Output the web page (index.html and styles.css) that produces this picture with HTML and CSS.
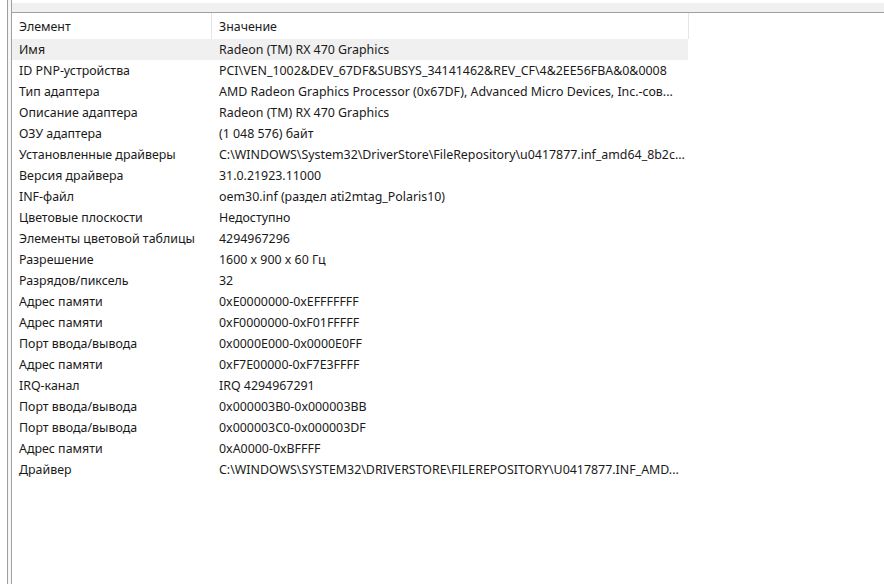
FILE: index.html
```html
<!doctype html>
<html>
  <head>
    <meta charset="utf-8">
    <title>Свойства</title>
    <link rel="stylesheet" href="styles.css">
  </head>
  <body>
    <div class="frame">
      <div class="gutter"></div>
      <div class="edge"></div>
      <div class="pane">
        <div class="strip"></div>
        <div class="list">
          <div class="row head">
            <div class="cell name">Элемент</div>
            <div class="cell value">Значение</div>
          </div>
          <div class="row selected">
            <div class="cell name">Имя</div>
            <div class="cell value">Radeon (TM) RX 470 Graphics</div>
          </div>
          <div class="row">
            <div class="cell name">ID PNP-устройства</div>
            <div class="cell value">PCI\VEN_1002&amp;DEV_67DF&amp;SUBSYS_34141462&amp;REV_CF\4&amp;2EE56FBA&amp;0&amp;0008</div>
          </div>
          <div class="row">
            <div class="cell name">Тип адаптера</div>
            <div class="cell value">AMD Radeon Graphics Processor (0x67DF), Advanced Micro Devices, Inc.-сов...</div>
          </div>
          <div class="row">
            <div class="cell name">Описание адаптера</div>
            <div class="cell value">Radeon (TM) RX 470 Graphics</div>
          </div>
          <div class="row">
            <div class="cell name">ОЗУ адаптера</div>
            <div class="cell value">(1 048 576) байт</div>
          </div>
          <div class="row">
            <div class="cell name">Установленные драйверы</div>
            <div class="cell value">C:\WINDOWS\System32\DriverStore\FileRepository\u0417877.inf_amd64_8b2c...</div>
          </div>
          <div class="row">
            <div class="cell name">Версия драйвера</div>
            <div class="cell value">31.0.21923.11000</div>
          </div>
          <div class="row">
            <div class="cell name">INF-файл</div>
            <div class="cell value">oem30.inf (раздел ati2mtag_Polaris10)</div>
          </div>
          <div class="row">
            <div class="cell name">Цветовые плоскости</div>
            <div class="cell value">Недоступно</div>
          </div>
          <div class="row">
            <div class="cell name">Элементы цветовой таблицы</div>
            <div class="cell value">4294967296</div>
          </div>
          <div class="row">
            <div class="cell name">Разрешение</div>
            <div class="cell value">1600 x 900 x 60 Гц</div>
          </div>
          <div class="row">
            <div class="cell name">Разрядов/пиксель</div>
            <div class="cell value">32</div>
          </div>
          <div class="row">
            <div class="cell name">Адрес памяти</div>
            <div class="cell value">0xE0000000-0xEFFFFFFF</div>
          </div>
          <div class="row">
            <div class="cell name">Адрес памяти</div>
            <div class="cell value">0xF0000000-0xF01FFFFF</div>
          </div>
          <div class="row">
            <div class="cell name">Порт ввода/вывода</div>
            <div class="cell value">0x0000E000-0x0000E0FF</div>
          </div>
          <div class="row">
            <div class="cell name">Адрес памяти</div>
            <div class="cell value">0xF7E00000-0xF7E3FFFF</div>
          </div>
          <div class="row">
            <div class="cell name">IRQ-канал</div>
            <div class="cell value">IRQ 4294967291</div>
          </div>
          <div class="row">
            <div class="cell name">Порт ввода/вывода</div>
            <div class="cell value">0x000003B0-0x000003BB</div>
          </div>
          <div class="row">
            <div class="cell name">Порт ввода/вывода</div>
            <div class="cell value">0x000003C0-0x000003DF</div>
          </div>
          <div class="row">
            <div class="cell name">Адрес памяти</div>
            <div class="cell value">0xA0000-0xBFFFF</div>
          </div>
          <div class="row">
            <div class="cell name">Драйвер</div>
            <div class="cell value">C:\WINDOWS\SYSTEM32\DRIVERSTORE\FILEREPOSITORY\U0417877.INF_AMD...</div>
          </div>
        </div>
      </div>
    </div>
  </body>
</html>
```
FILE: styles.css
```css
html, body {
  margin: 0;
  padding: 0;
  background: #ffffff;
}
body {
  font-family: "Noto Sans", "Open Sans", sans-serif;
  font-size: 12.4px;
  color: #1a1a1a;
}
.frame {
  display: flex;
  height: 584px;
  overflow: hidden;
}
.gutter {
  width: 7px;
  background: #ffffff;
}
.edge {
  width: 3px;
  border-left: 1px solid #a0a0a0;
  border-right: 1px solid #a0a0a0;
  background: #f7f7f7;
}
.pane {
  flex: 1;
  display: flex;
  flex-direction: column;
}
.strip {
  height: 9px;
  margin-top: 3px;
  background: #f0f0f0;
  border-bottom: 1px solid #a0a0a0;
}
.list {
  flex: 1;
  background: #ffffff;
}
.row {
  display: flex;
  width: 676px;
  height: 21px;
  align-items: center;
  white-space: nowrap;
}
.row.head {
  height: 26px;
  border-right: 1px solid #e5e5e5;
}
.row.head .name {
  border-right: 1px solid #e5e5e5;
}
.row.selected {
  background: #f0f0f0;
}
.cell {
  box-sizing: border-box;
  height: 100%;
  display: flex;
  align-items: center;
  padding-left: 7px;
  overflow: hidden;
}
.name {
  width: 200px;
  flex: none;
}
.value {
  flex: 1;
}
```
